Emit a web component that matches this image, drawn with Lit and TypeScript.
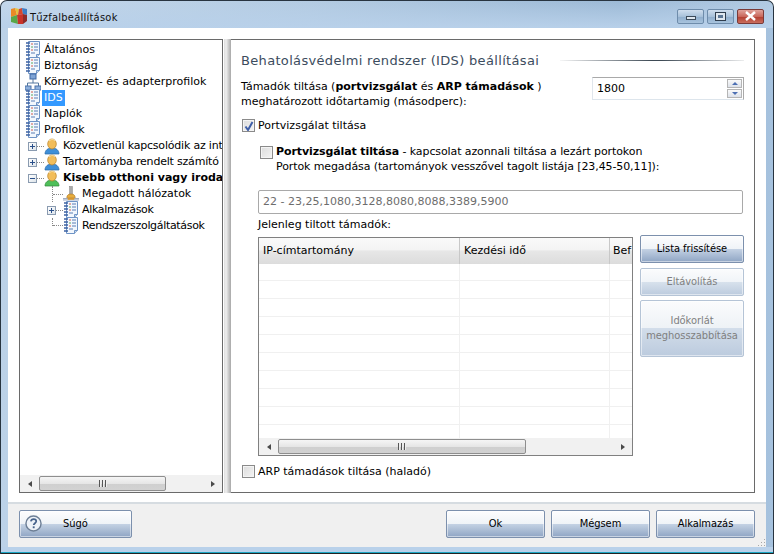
import { LitElement, html, css, svg } from "lit";
import { customElement } from "lit/decorators.js";

const docIcon = html`<svg class="ico" width="16" height="18" viewBox="0 0 16 18">
  <path d="M3.500.5h11v13l-3 3h-8z" fill="#f2f7fd" stroke="#6f94c6"/>
  <path d="M11.500 16.500v-3h3" fill="#c6d6ea" stroke="#6f94c6"/>
  <path d="M1 2h4M1 5h4M1 8h4M1 11h4M1 14h4" stroke="#3d62a3" stroke-width="1.400"/>
  <path d="M6 3h2" stroke="#d05a4a"/><path d="M9 3h4" stroke="#5b7fb5"/>
  <path d="M6 6h2" stroke="#5aa85a"/><path d="M9 6h4" stroke="#5b7fb5"/>
  <path d="M6 9h2" stroke="#d05a4a"/><path d="M9 9h4" stroke="#5b7fb5"/>
  <path d="M6 12h4" stroke="#5b7fb5"/>
</svg>`;

const netIcon = html`<svg class="ico" width="16" height="18" viewBox="0 0 16 18">
  <rect x="5" y="1" width="6" height="5" fill="#7fa4d6" stroke="#3f68a5"/>
  <path d="M8 6v4M2.500 13v-3h11v3" fill="none" stroke="#56789f"/>
  <rect x="0" y="13" width="6" height="4" fill="#8fb0dc" stroke="#4d72a8"/>
  <rect x="10" y="13" width="6" height="4" fill="#8fb0dc" stroke="#4d72a8"/>
</svg>`;

const userIcon = (body: string, edge: string) => html`<svg class="ico" width="16" height="17" viewBox="0 0 16 17">
  <path d="M1 16c0-4 3-6 7-6s7 2 7 6z" fill="${body}" stroke="${edge}" stroke-width=".7"/>
  <ellipse cx="8" cy="6" rx="4.300" ry="5" fill="#f2bd5a" stroke="#b97f22" stroke-width=".7"/>
  <path d="M5 3c2-2 5-2 6 0" stroke="#fde6ae" fill="none"/>
</svg>`;

const brushIcon = html`<svg class="ico" width="16" height="16" viewBox="0 0 17 16">
  <rect x="7" y="0" width="3" height="9" fill="#a9a9a9" stroke="#7c7c7c" stroke-width=".5"/>
  <path d="M4 12c0-3 2-4 4.500-4S13 9 13 12z" fill="#e8ad3c" stroke="#a9711c" stroke-width=".6"/>
  <path d="M0 12.500h17v3H0z" fill="#cfd6e2"/>
  <path d="M0 13h17" stroke="#8d9ab0"/>
  <path d="M5 12h7v2H5z" fill="#d9962a"/>
</svg>`;

const logo = html`<svg class="logo" width="18" height="18" viewBox="0 0 18 18">
  <path d="M1 2l4-1 2 7-6 2z" fill="#ea8a25"/>
  <path d="M5 1l4 1-1 6-1 0z" fill="#e9c53a"/>
  <path d="M9 2l3-1 1 6-5 1z" fill="#d5452d"/>
  <path d="M12 1l5 1 0 6-4-1z" fill="#3d7cc4"/>
  <path d="M1 10l6-2 1 9-7-2z" fill="#59a748"/>
  <path d="M7 8l6-1 0 10-5 0z" fill="#c9332a"/>
  <path d="M13 7l4 1 0 6-4 3z" fill="#8c2b2b"/>
</svg>`;

const helpIcon = html`<svg class="help" width="17" height="17" viewBox="0 0 18 18">
  <circle cx="9" cy="9" r="8" fill="#eef3f9" stroke="#6d7f96" stroke-width="1.500"/>
  <path d="M6.200 6.800c.3-1.800 1.500-2.500 2.900-2.500 1.600 0 2.800 1 2.800 2.400 0 2-2.700 2-2.700 4" fill="none" stroke="#47638c" stroke-width="1.800"/>
  <rect x="8.200" y="12" width="2" height="2" fill="#47638c"/>
</svg>`;

const check = svg`<path d="M2.500 6.500l2.500 3.500 4.500-8" fill="none" stroke="#3f5fa8" stroke-width="2"/>`;

@customElement("app-root")
export class AppRoot extends LitElement {
  static styles = css`
    :host { display: block; width: 774px; height: 554px; overflow: hidden; background: #fff;
      font: 11px "DejaVu Sans", Verdana, sans-serif; color: #000; }
    * { box-sizing: border-box; }
    .win { width: 774px; height: 554px; display: flex; flex-direction: column;
      border-radius: 7px 7px 0 0; border: 1px solid #283440; border-bottom: 0; overflow: hidden;
      background: linear-gradient(90deg, #bcd2e8 0, #a9c4de 40%, #8fb0d0 80%, #a6c2de 100%); }
    .title { height: 27px; flex: none; display: flex; align-items: center; padding: 0 9px 0 9px;
      background: linear-gradient(180deg, rgba(255,255,255,.12), rgba(185,209,234,.95) 95%); }
    .logo { flex: none; margin-right: 2px; margin-top: 3px; }
    .ttl { flex: 1; margin-top: 5px; color: #101010; font-family: "DejaVu Sans Condensed", "DejaVu Sans", sans-serif; font-stretch: condensed; letter-spacing: .25px; }
    .caps { display: flex; gap: 3px; margin-top: 3px; }
    .cap { width: 27px; height: 15px; border: 1px solid #6e8cab; border-radius: 2px; display: flex;
      align-items: center; justify-content: center;
      background: linear-gradient(180deg, #cfdeee 0, #a8c1da 50%, #8fadcc 51%, #a8c3dd 100%); }
    .cap.close { border-color: #7a3a38; background: linear-gradient(180deg, #e0a39b 0, #c9685c 50%, #b23c2e 51%, #c96e5e 100%); }
    .cap .min { width: 10px; height: 4px; border: 1px solid #3c4a5a; background: #dfe7ef; margin-top: 4px; }
    .cap .max { width: 11px; height: 9px; border: 1px solid #2f3d4d; background: #dfe7ef; display: flex; align-items:center; justify-content:center; }
    .cap .max i { display:block; width: 5px; height: 3px; background: #5c7694; }
    .frame { flex: 1; margin: 0 7px 0 7px; display: flex; flex-direction: column; min-height: 0; background: #fff; }
    .main { height: 474px; flex: none; display: flex; padding: 11px 11px 9px 11px; background: #fff; }
    .tree { width: 204px; flex: none; border: 1px solid #6a6a6a; display: flex; flex-direction: column; background: #fff; }
    .tree-list { flex: 1; overflow: hidden; padding-top: 2px; min-height: 0; }
    .row { height: 16px; display: flex; align-items: center; white-space: nowrap; line-height: 16px; }
    .ico { flex: none; }
    .row .ico { margin-right: 3px; }
    .row.l0 { padding-left: 5px; }
    .row.l1 { padding-left: 8px; }
    .row.l2.noex { padding-left: 32px; }
    .row.l2.withex { padding-left: 27px; }
    .tight { letter-spacing: -.2px; }
    .tighter { letter-spacing: -.32px; }
    .row b { font-weight: 700; }
    .sel { background: #3399ff; color: #fff; padding: 0 2px; margin-left: -2px; }
    .ex { width: 9px; height: 9px; flex: none; border: 1px solid #8a9bb0; background: linear-gradient(135deg, #fff, #dde4ea); display: flex;
      align-items: center; justify-content: center; }
    .ex svg { display: block; }
    .dot { width: 7px; height: 1px; flex: none; border-top: 1px dotted #888; }
    .vert { width: 11px; flex: none; height: 16px; border-left: 1px dotted #888; display: flex; align-items: center; }
    .vert i { display: block; width: 100%; border-top: 1px dotted #888; }
    .vert.short { height: 8px; align-self: flex-start; align-items: flex-end; }
    .split { width: 7px; flex: none; margin-left: 1px; background: linear-gradient(90deg, #dcdcdc 0, #efefef 30%, #a8a8a8 100%); }
    .panel { flex: 1; border: 1px solid #6a6a6a; border-left: 0; background: #fff; padding: 0 10px 0 10px; display: flex; flex-direction: column; }
    .head { display: flex; align-items: center; height: 17px; margin-top: 12px; }
    .head h1 { margin: 0; font-size: 13px; font-weight: 400; letter-spacing: .33px; color: #3c4c5e; white-space: nowrap; line-height: 17px; }
    .head .rule { flex: 1; height: 1px; margin-left: 21px;
      background: linear-gradient(90deg, rgba(60,70,80,.05), #3e4a55 50%, #3e4a55 55%, rgba(60,70,80,.1) 100%); }
    .top { display: flex; margin-top: 8px; height: 33px; justify-content: space-between; }
    .top .lbl { line-height: 15px; white-space: nowrap; margin-top: 2px; }
    .spin { width: 152px; height: 23px; flex: none; border: 1px solid #a9a9a9; border-left-color: #e0e6ec; border-bottom-color: #dde5ec;
      display: flex; align-items: center; justify-content: space-between; padding: 0 1px 0 4px; }
    .arrows { display: flex; flex-direction: column; gap: 1px; }
    .arrows span { width: 15px; height: 9px; border: 1px solid #b5b5b5; background: linear-gradient(180deg, #fafafa, #dde2ea); display: flex; align-items: center; justify-content: center; }
    .arrows span i { display: block; width: 0; height: 0; border: 3px solid transparent; }
    .arrows .up i { border-top: 0; border-bottom: 3px solid #4c6fb3; }
    .arrows .dn i { border-bottom: 0; border-top: 3px solid #4c6fb3; }
    .cb { width: 13px; height: 13px; flex: none; border: 1px solid #8a8a8a; background: linear-gradient(135deg, #dcdcdc, #f4f4f4); box-shadow: inset 0 0 0 1px #f4f4f4; display: block; }
    .cb svg { display: block; }
    .chk { display: flex; align-items: center; gap: 3px; white-space: nowrap; }
    .c1 { margin-top: 8px; margin-left: 1px; height: 15px; }
    .c2 { margin-top: 11px; margin-left: 19px; align-items: flex-start; }
    .c2 .cb { margin-top: 2px; }
    .c2 .txt { line-height: 15px; letter-spacing: -.1px; }
    .c2 .txt b { letter-spacing: -.1px; }
    .ports { margin: 16px 0 0 17px; height: 24px; width: 485px; flex: none; border: 1px solid #a9a9a9; border-radius: 2px; color: #6d6d6d; padding: 0 4px; line-height: 22px; white-space: nowrap; }
    .cur { margin: 3px 0 0 17px; height: 16px; line-height: 16px; }
    .mid { display: flex; margin: 4px 0 0 17px; gap: 7px; align-items: flex-start; }
    .tbl { width: 375px; height: 219px; flex: none; border: 1px solid #808080; display: flex; flex-direction: column; }
    .thead { height: 26px; flex: none; display: grid; grid-template-columns: 201px 150px 1fr; background: linear-gradient(180deg, #fafafa 0, #f4f4f4 45%, #e7e7e7 50%, #dcdcdc 100%); }
    .thead div { padding: 0 0 0 4px; line-height: 26px; border-right: 1px solid #c8c8c8; white-space: nowrap; overflow: hidden; }
    .thead div:last-child { border: 0; padding-left: 3px; }
    .tbody { flex: 1; overflow: hidden; min-height: 0; }
    .tr { display: grid; grid-template-columns: 201px 150px 1fr; height: 18px; border-bottom: 1px solid #f0f0f0; }
    .tr.first { height: 17px; }
    .tr.last { height: 13px; border-bottom: 0; }
    .tr div { border-right: 1px solid #f0f0f0; }
    .tr div:last-child { border: 0; }
    .sb { height: 17px; flex: none; background: #f1f1f1; display: flex; align-items: center; }
    .arr { width: 19px; height: 15px; flex: none; display: flex; align-items: center; justify-content: center; }
    .arr i { display: block; width: 0; height: 0; border: 3.500px solid transparent; }
    .arr.l i { border-left: 0; border-right: 4px solid #4a4a4a; }
    .arr.r i { border-right: 0; border-left: 4px solid #4a4a4a; }
    .thumb { height: 15px; flex: none; border: 1px solid #8e8e8e; border-radius: 2px; background: linear-gradient(180deg, #f5f5f5, #e6e6e6 50%, #cfcfcf 55%, #d2d2d2); display: flex; align-items: center; justify-content: center; gap: 1px; }
    .thumb i { display: block; width: 1px; height: 7px; background: #555; box-shadow: 1px 0 0 #eee; margin-right: 1px; }
    .track { flex: 1; }
    .side { width: 104px; flex: none; display: flex; flex-direction: column; margin-top: -2px; gap: 5px; }
    .btn { display: flex; align-items: center; justify-content: center; text-align: center; height: 28px; flex: none; border: 1px solid #7c90ad; border-radius: 2px; padding-bottom: 1px;
      background: linear-gradient(180deg, #fdfdfe 0, #eff3f7 50%, #c3d1e3 51%, #8fa5c4 100%); box-shadow: inset 0 0 0 1px rgba(255,255,255,.5);
      font-family: "DejaVu Sans Condensed", "DejaVu Sans", sans-serif; font-stretch: condensed; line-height: 15px; letter-spacing: -.05px; }
    .btn.off { color: #7f7f7f; border-color: #b5c4d6; background: linear-gradient(180deg, #fbfcfd 0, #f0f4f8 50%, #d7e1ec 51%, #bccbde 100%); }
    .btn.tall { height: 57px; margin-top: -1px; background: linear-gradient(180deg, #fbfcfd 0, #eef2f6 49%, #d2ddea 50%, #bccbde 100%); }
    .c3 { margin: 8px 0 0 1px; height: 15px; }
    .foot { flex: 1; background: #f0f0f0; border-top: 2px solid #d6dce1; display: flex; padding: 6px 11px 0 11px; gap: 6px; position: relative; }
    .foot .btn { width: 99px; }
    .foot .help-btn { width: 113px; margin-right: auto; justify-content: flex-start; padding-left: 5px; gap: 21px; }
    .grip { position: absolute; right: 1px; bottom: 1px; width: 8px; height: 8px;
      background: radial-gradient(circle, #a8a8a8 1px, transparent 1px) 0 0 / 3px 3px; clip-path: polygon(100% 0, 100% 100%, 0 100%); }
    .bottom { height: 7px; flex: none; margin: 0 -8px; background: linear-gradient(180deg, #b9d1ea 0, #b9d1ea 75%, #1ca6c4 75%, #1ca6c4 85%, #222 85%); }
  `;

  private plus(open = false) {
    return html`<span class="ex"><svg width="7" height="7" viewBox="0 0 7 7"><path d="M1 3.500h5" stroke="#2a4f8a"/>${open ? "" : svg`<path d="M3.500 1v5" stroke="#2a4f8a"/>`}</svg></span>`;
  }

  private scrollbar(thumb: number) {
    return html`<div class="sb">
      <span class="arr l"><i></i></span>
      <span class="thumb" style="width:${thumb}px"><i></i><i></i><i></i></span>
      <span class="track"></span>
      <span class="arr r"><i></i></span>
    </div>`;
  }

  private cb(on = false) {
    return html`<span class="cb">${on ? html`<svg width="11" height="11" viewBox="0 0 11 11">${check}</svg>` : ""}</span>`;
  }

  render() {
    const rows = Array.from({ length: 10 }, (_, i) => i);
    return html`<div class="win">
      <div class="title">
        ${logo}<span class="ttl">Tűzfalbeállítások</span>
        <div class="caps">
          <span class="cap"><span class="min"></span></span>
          <span class="cap"><span class="max"><i></i></span></span>
          <span class="cap close"><svg width="13" height="10" viewBox="0 0 13 10"><path d="M2 1l9 8M11 1l-9 8" stroke="#fff" stroke-width="2.400"/></svg></span>
        </div>
      </div>
      <div class="frame">
        <div class="main">
          <div class="tree">
            <div class="tree-list">
              <div class="row l0">${docIcon}Általános</div>
              <div class="row l0">${docIcon}Biztonság</div>
              <div class="row l0">${netIcon}Környezet- és adapterprofilok</div>
              <div class="row l0">${docIcon}<span class="sel">IDS</span></div>
              <div class="row l0">${docIcon}Naplók</div>
              <div class="row l0">${docIcon}Profilok</div>
              <div class="row l1 tight">${this.plus()}<span class="dot"></span>${userIcon("#3f8fd8", "#2a6aa8")}Közvetlenül kapcsolódik az int</div>
              <div class="row l1 tight">${this.plus()}<span class="dot"></span>${userIcon("#3f8fd8", "#2a6aa8")}Tartományba rendelt számító</div>
              <div class="row l1">${this.plus(true)}<span class="dot"></span>${userIcon("#4fbf5a", "#2e8a3a")}<b>Kisebb otthoni vagy iroda</b></div>
              <div class="row l2 noex"><span class="vert"><i></i></span>${brushIcon}Megadott hálózatok</div>
              <div class="row l2 withex tighter">${this.plus()}<span class="dot"></span>${docIcon}Alkalmazások</div>
              <div class="row l2 noex tighter"><span class="vert short"><i></i></span>${docIcon}Rendszerszolgáltatások</div>
            </div>
            ${this.scrollbar(127)}
          </div>
          <div class="split"></div>
          <div class="panel">
            <div class="head"><h1>Behatolásvédelmi rendszer (IDS) beállításai</h1><span class="rule"></span></div>
            <div class="top">
              <div class="lbl">Támadók tiltása (<b>portvizsgálat</b> és <b>ARP támadások</b> )<br />meghatározott időtartamig (másodperc):</div>
              <div class="spin"><span>1800</span><span class="arrows"><span class="up"><i></i></span><span class="dn"><i></i></span></span></div>
            </div>
            <div class="chk c1">${this.cb(true)}<span>Portvizsgálat tiltása</span></div>
            <div class="chk c2">${this.cb()}<span class="txt"><b>Portvizsgálat tiltása</b> - kapcsolat azonnali tiltása a lezárt portokon<br />Portok megadása (tartományok vesszővel tagolt listája [23,45-50,11]):</span></div>
            <div class="ports">22 - 23,25,1080,3128,8080,8088,3389,5900</div>
            <div class="cur">Jelenleg tiltott támadók:</div>
            <div class="mid">
              <div class="tbl">
                <div class="thead"><div>IP-címtartomány</div><div>Kezdési idő</div><div>Bef</div></div>
                <div class="tbody">
                  ${rows.map((i) => html`<div class="tr ${i === 0 ? "first" : i === 9 ? "last" : ""}"><div></div><div></div><div></div></div>`)}
                </div>
                ${this.scrollbar(248)}
              </div>
              <div class="side">
                <div class="btn">Lista frissítése</div>
                <div class="btn off">Eltávolítás</div>
                <div class="btn off tall">Időkorlát<br />meghosszabbítása</div>
              </div>
            </div>
            <div class="chk c3">${this.cb()}<span>ARP támadások tiltása (haladó)</span></div>
          </div>
        </div>
        <div class="foot">
          <div class="btn help-btn">${helpIcon}<span>Súgó</span></div>
          <div class="btn">Ok</div>
          <div class="btn">Mégsem</div>
          <div class="btn">Alkalmazás</div>
          <span class="grip"></span>
        </div>
        <div class="bottom"></div>
      </div>
    </div>`;
  }
}
